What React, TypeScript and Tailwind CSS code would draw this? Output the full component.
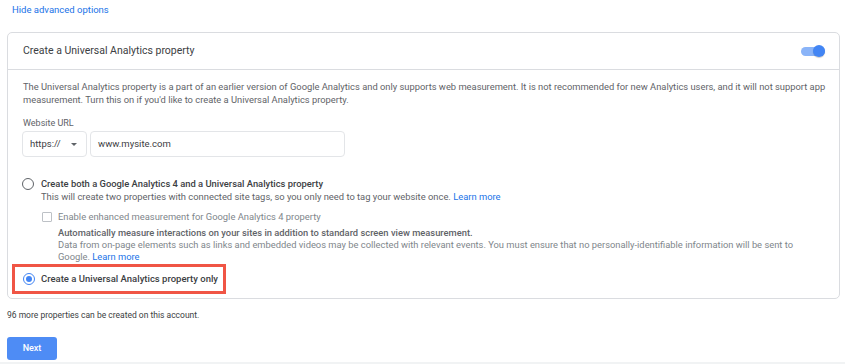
import React from "react";

function Toggle() {
  return (
    <div className="relative w-[24px] h-[12px] flex items-center">
      <div className="w-full h-[9px] rounded-full bg-[#8ab4f8]" />
      <div className="absolute right-0 top-0 w-[12px] h-[12px] rounded-full bg-[#4285f4] shadow-[0_1px_1px_rgba(0,0,0,0.2)]" />
    </div>
  );
}

function Radio({ checked }: { checked?: boolean }) {
  return (
    <span
      className={
        checked
          ? "shrink-0 block w-[12px] h-[12px] rounded-full border-[1.5px] border-[#4285f4] flex items-center justify-center"
          : "shrink-0 block w-[12px] h-[12px] rounded-full border-[1.5px] border-[#5f6368]"
      }
    >
      {checked && <span className="block w-[6px] h-[6px] rounded-full bg-[#4285f4]" />}
    </span>
  );
}

export default function App() {
  return (
    <div className="w-[845px] h-[364px] bg-white flex flex-col overflow-hidden font-['Roboto',sans-serif] text-[#5f6368]">
      <div className="flex-1 px-[7px]">
        <div className="pt-[4px] pl-[5px] text-[9.5px] leading-[12px] text-[#1a73e8]">
          Hide advanced options
        </div>

        {/* card */}
        <div className="mt-[16px] w-[833px] border border-[#dadce0] rounded-[5px]">
          <div className="h-[37px] border-b border-[#dadce0] flex items-center justify-between pl-[15px] pr-[14px]">
            <span className="text-[10.5px] text-[#3c4043]">Create a Universal Analytics property</span>
            <Toggle />
          </div>

          <div className="pl-[14px] pr-[8px] pt-[10px] pb-[4px]">
            <p className="text-[9.35px] leading-[13px] pl-[1px]">
              The Universal Analytics property is a part of an earlier version of Google Analytics and only supports
              web measurement. It is not recommended for new Analytics users, and it will not support app
              <br />
              measurement. Turn this on if you'd like to create a Universal Analytics property.
            </p>

            <div className="mt-[11px] pl-[1px] text-[9px] leading-[12px]">Website URL</div>
            <div className="mt-[2px] flex gap-[3px]">
              <div className="w-[65px] h-[26px] border border-[#e3e5e8] rounded-[4px] flex items-center justify-between pl-[7px] pr-[9px] text-[9.5px] text-[#3c4043]">
                <span>https://</span>
                <span className="w-0 h-0 border-l-[3px] border-r-[3px] border-t-[3px] border-l-transparent border-r-transparent border-t-[#5f6368]" />
              </div>
              <div className="w-[255px] h-[26px] border border-[#e3e5e8] rounded-[4px] flex items-center pl-[7px] text-[9.5px] text-[#3c4043]">
                www.mysite.com
              </div>
            </div>

            {/* option 1 */}
            <div className="mt-[20px] flex items-start gap-[7px]">
              <div className="pt-[1px]">
                <Radio />
              </div>
              <div className="text-[9.4px] leading-[13px]">
                <div className="font-medium text-[#3c4043]">
                  Create both a Google Analytics 4 and a Universal Analytics property
                </div>
                <div>
                  This will create two properties with connected site tags, so you only need to tag your website once.{" "}
                  <span className="text-[#1a73e8]">Learn more</span>
                </div>
                <div className="mt-[7px] flex items-center gap-[6px] text-[#80868b]">
                  <span className="block ml-[1px] w-[10px] h-[10px] border border-[#bdc1c6] rounded-[1px]" />
                  <span>Enable enhanced measurement for Google Analytics 4 property</span>
                </div>
                <div className="mt-[4px] pl-[17px] pr-[30px] text-[9.35px] leading-[12px]">
                  <div className="font-medium text-[#5f6368]">
                    Automatically measure interactions on your sites in addition to standard screen view measurement.
                  </div>
                  <div className="text-[#80868b]">
                    Data from on-page elements such as links and embedded videos may be collected with relevant events.
                    You must ensure that no personally-identifiable information will be sent to Google.{" "}
                    <span className="text-[#1a73e8]">Learn more</span>
                  </div>
                </div>
              </div>
            </div>

            {/* option 2 */}
            <div className="mt-[1px] -ml-[10px] w-[214px] h-[30px] border-[3px] border-[#f05545] flex items-center gap-[6px] pl-[8px]">
              <Radio checked />
              <span className="text-[9.5px] font-medium text-[#3c4043]">Create a Universal Analytics property only</span>
            </div>
          </div>
        </div>

        <div className="mt-[10px] text-[8.5px] leading-[12px] text-[#3c4043]">
          96 more properties can be created on this account.
        </div>

        <button className="mt-[16px] w-[50px] h-[23px] rounded-[3px] bg-[#4e8cf5] text-white text-[9px] font-medium">
          Next
        </button>
      </div>
      <div className="h-[2px] bg-[#f1f3f4]" />
    </div>
  );
}
